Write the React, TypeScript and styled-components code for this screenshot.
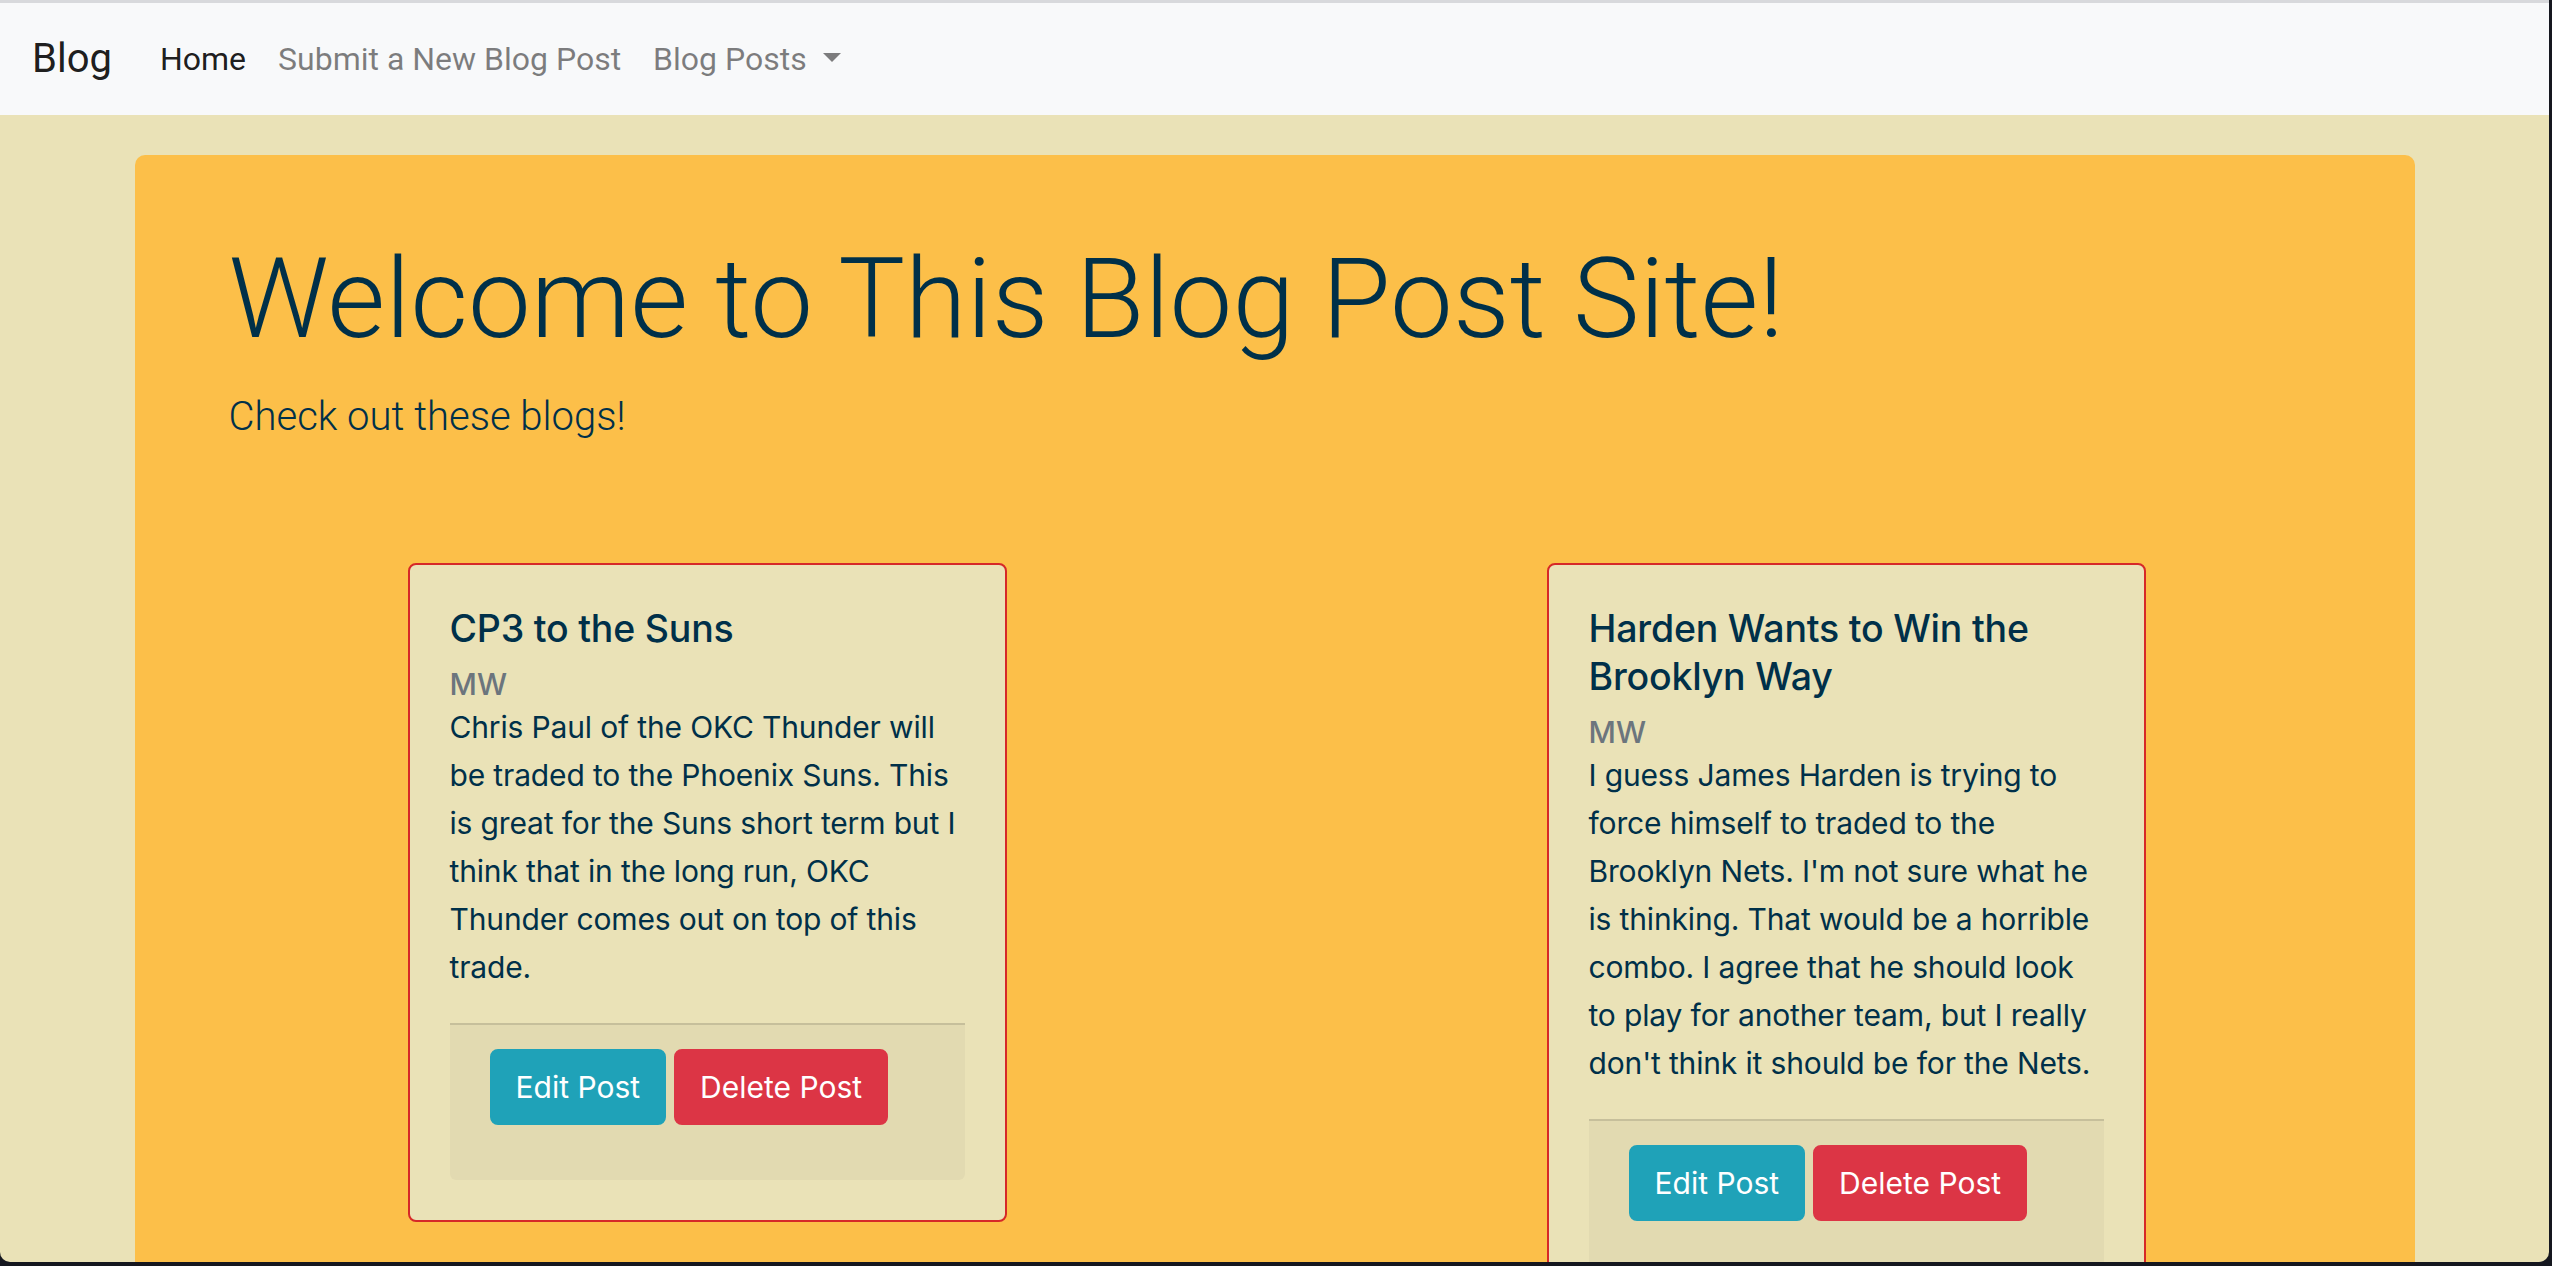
import React from "react";
import styled, { createGlobalStyle } from "styled-components";

const GlobalStyle = createGlobalStyle`
  html, body { margin: 0; padding: 0; height: 100%; }
  body {
    background: #15171f;
    overflow: hidden;
    font-family: Roboto, "Liberation Sans", sans-serif;
  }
  *, *::before, *::after { box-sizing: border-box; }
`;

const Window = styled.div`
  width: calc(100% - 3px);
  height: calc(100vh - 4px);
  background: #eae2b7;
  border-top: 3px solid #d8d9dc;
  border-radius: 0 0 10px 10px;
  overflow: hidden;
`;

const Navbar = styled.nav`
  display: flex;
  align-items: center;
  padding: 16px 32px;
  background: #f8f9fa;
`;

const Brand = styled.a`
  font-family: Roboto, sans-serif;
  font-size: 40px;
  line-height: 60px;
  padding: 10px 0;
  margin-right: 32px;
  color: rgba(0, 0, 0, 0.9);
  text-decoration: none;
`;

const NavList = styled.ul`
  display: flex;
  list-style: none;
  margin: 0;
  padding: 0;
`;

const NavLink = styled.a<{ $active?: boolean }>`
  display: block;
  padding: 16px;
  font-family: Roboto, sans-serif;
  font-size: 32px;
  line-height: 48px;
  text-decoration: none;
  color: ${(p) => (p.$active ? "rgba(0,0,0,0.9)" : "rgba(0,0,0,0.5)")};
`;

const Caret = styled.span`
  display: inline-block;
  margin-left: 16px;
  vertical-align: 0.255em;
  border-top: 0.3em solid;
  border-right: 0.3em solid transparent;
  border-left: 0.3em solid transparent;
  border-bottom: 0;
`;

const Jumbotron = styled.section`
  width: 2280px;
  margin: 40px auto 0;
  background: #fcbf49;
  border-radius: 10px;
  padding: 77px 64px 128px;
  color: #003049;
`;

const Inner = styled.div`
  padding: 0 30px;
`;

const Heading = styled.h1`
  font-family: Roboto, sans-serif;
  font-weight: 300;
  font-size: 112px;
  line-height: 1.2;
  margin: 0 0 21px;
`;

const Lead = styled.p`
  font-family: Roboto, sans-serif;
  font-weight: 300;
  font-size: 40px;
  line-height: 60px;
  margin: 0;
`;

const CardGrid = styled.div`
  display: grid;
  grid-template-columns: 599px 599px;
  column-gap: 540px;
  align-items: start;
  margin-top: 116px;
  padding-left: 209px;
`;

const Card = styled.article`
  background: #eae2b7;
  border: 2px solid #d62828;
  border-radius: 8px;
  padding: 40px;
  font-family: Inter, "Noto Sans", sans-serif;
  color: #003049;
`;

const CardTitle = styled.h5`
  font-size: 37.5px;
  line-height: 48px;
  font-weight: 500;
  letter-spacing: -0.2px;
  margin: 0 0 24px;
`;

const CardSubtitle = styled.h6`
  font-size: 30px;
  line-height: 38px;
  font-weight: 500;
  color: #6c757d;
  margin: -12px 0 0;
`;

const CardText = styled.p`
  font-size: 30px;
  line-height: 48px;
  letter-spacing: -0.15px;
  margin: 0 0 32px;
`;

const CardFooter = styled.div`
  display: flex;
  gap: 8px;
  background: rgba(0, 0, 0, 0.03);
  border-top: 2px solid rgba(0, 0, 0, 0.125);
  border-radius: 0 0 6px 6px;
  padding: 24px 40px 55px;
`;

const Button = styled.button<{ $variant: "info" | "danger" }>`
  font-family: Inter, "Noto Sans", sans-serif;
  font-size: 30px;
  line-height: 48px;
  font-weight: 400;
  padding: 12px 24px;
  border-radius: 8px;
  color: #fff;
  cursor: pointer;
  background: ${(p) => (p.$variant === "info" ? "#1fa2b8" : "#dc3545")};
  border: 2px solid ${(p) => (p.$variant === "info" ? "#1fa2b8" : "#dc3545")};
`;

const posts = [
  {
    title: "CP3 to the Suns",
    author: "MW",
    body:
      "Chris Paul of the OKC Thunder will be traded to the Phoenix Suns. This is great for the Suns short term but I think that in the long run, OKC Thunder comes out on top of this trade.",
  },
  {
    title: "Harden Wants to Win the Brooklyn Way",
    author: "MW",
    body:
      "I guess James Harden is trying to force himself to traded to the Brooklyn Nets. I'm not sure what he is thinking. That would be a horrible combo. I agree that he should look to play for another team, but I really don't think it should be for the Nets.",
  },
];

export default function App() {
  return (
    <>
      <GlobalStyle />
      <Window>
        <Navbar>
          <Brand href="#">Blog</Brand>
          <NavList>
            <li>
              <NavLink href="#" $active>
                Home
              </NavLink>
            </li>
            <li>
              <NavLink href="#">Submit a New Blog Post</NavLink>
            </li>
            <li>
              <NavLink href="#">
                Blog Posts
                <Caret />
              </NavLink>
            </li>
          </NavList>
        </Navbar>
        <Jumbotron>
          <Inner>
            <Heading>Welcome to This Blog Post Site!</Heading>
            <Lead>Check out these blogs!</Lead>
          </Inner>
          <CardGrid>
            {posts.map((p) => (
              <Card key={p.title}>
                <CardTitle>{p.title}</CardTitle>
                <CardSubtitle>{p.author}</CardSubtitle>
                <CardText>{p.body}</CardText>
                <CardFooter>
                  <Button $variant="info">Edit Post</Button>
                  <Button $variant="danger">Delete Post</Button>
                </CardFooter>
              </Card>
            ))}
          </CardGrid>
        </Jumbotron>
      </Window>
    </>
  );
}
